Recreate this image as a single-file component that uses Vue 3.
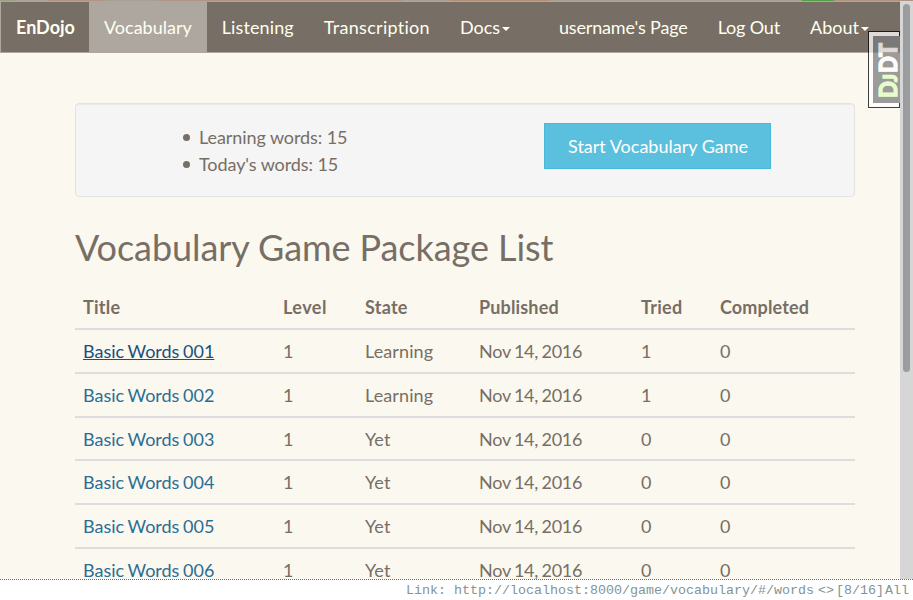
<script setup>
const leftNav = [
  { label: 'Vocabulary', active: true },
  { label: 'Listening', cls: 'loose' },
  { label: 'Transcription', cls: 'looser' },
  { label: 'Docs', caret: true },
]
const rightNav = [
  { label: "username's Page" },
  { label: 'Log Out' },
  { label: 'About', caret: true },
]
const columns = ['Title', 'Level', 'State', 'Published', 'Tried', 'Completed']
const packages = [
  { title: 'Basic Words 001', state: 'Learning', tried: 1, hover: true },
  { title: 'Basic Words 002', state: 'Learning', tried: 1 },
  { title: 'Basic Words 003', state: 'Yet', tried: 0 },
  { title: 'Basic Words 004', state: 'Yet', tried: 0 },
  { title: 'Basic Words 005', state: 'Yet', tried: 0 },
  { title: 'Basic Words 006', state: 'Yet', tried: 0 },
]
</script>

<template>
  <div class="screen">
    <div class="edge"></div>
    <div class="viewport">
      <div class="page">
        <nav class="navbar">
          <a class="brand">EnDojo</a>
          <a v-for="item in leftNav" :key="item.label" class="link" :class="[item.cls, { active: item.active }]">
            {{ item.label }}<i v-if="item.caret" class="caret"></i>
          </a>
          <div class="right">
            <a v-for="item in rightNav" :key="item.label" class="link">
              {{ item.label }}<i v-if="item.caret" class="caret"></i>
            </a>
          </div>
        </nav>
        <main class="container">
          <section class="well">
            <ul class="stats">
              <li>Learning words: 15</li>
              <li>Today's words: 15</li>
            </ul>
            <button class="start">Start Vocabulary Game</button>
          </section>
          <h1>Vocabulary Game Package List</h1>
          <table>
            <colgroup>
              <col class="c-title"><col class="c-level"><col class="c-state">
              <col class="c-published"><col class="c-tried"><col>
            </colgroup>
            <thead>
              <tr><th v-for="c in columns" :key="c">{{ c }}</th></tr>
            </thead>
            <tbody>
              <tr v-for="p in packages" :key="p.title">
                <td><a class="title" :class="{ hover: p.hover }">{{ p.title }}</a></td>
                <td>1</td>
                <td class="state">{{ p.state }}</td>
                <td class="date">Nov 14, 2016</td>
                <td>{{ p.tried }}</td>
                <td>0</td>
              </tr>
            </tbody>
          </table>
        </main>
        <div class="handle">
          <svg width="27" height="67" viewBox="0 0 27 67">
            <g transform="translate(24 61) rotate(-90)" class="djdt">
              <text class="green" x="-1" y="0" font-size="25" textLength="17" lengthAdjust="spacingAndGlyphs">D</text>
              <text class="green" x="15" y="0" font-size="19" textLength="8" lengthAdjust="spacingAndGlyphs">J</text>
              <text x="24" y="0" font-size="25" textLength="17" lengthAdjust="spacingAndGlyphs">D</text>
              <text x="40" y="0" font-size="25" textLength="14" lengthAdjust="spacingAndGlyphs">T</text>
            </g>
          </svg>
        </div>
      </div>
      <div class="scrollbar"><div class="thumb"></div></div>
    </div>
    <footer class="status">
      <span>Link: http://localhost:8000/game/vocabulary/#/words</span>
      <span class="history">&lt;&gt;</span>
      <span>[8/16]</span>
      <span class="all">All</span>
    </footer>
  </div>
</template>

<style>
body { margin: 0; overflow: hidden; }
</style>

<style scoped>
* { box-sizing: border-box; }
.screen {
  width: 913px;
  height: 600px;
  display: flex;
  flex-direction: column;
  overflow: hidden;
  background: #fff;
  color: #776e65;
  font: 18px/25.75px Lato, sans-serif;
}
.edge {
  height: 1px;
  flex: none;
  background: linear-gradient(90deg, #9da083 0 15px, #aaa39a 15px 48px, #b09583 48px 105px, #a7a097 105px 158px, #b09583 158px 404px, #a7a097 404px 450px, #b38f77 450px 550px, #aa9e91 550px 802px, #55a044 802px 834px, #b09583 834px 913px);
}
.viewport { display: flex; height: 578px; flex: none; overflow: hidden; }
.page { position: relative; width: 900px; height: 578px; background: #fbf8ef; overflow: hidden; }
.navbar {
  display: flex;
  height: 52px;
  border: 1px solid #aea79f;
  border-right: 0;
  background: #776e65;
  color: #fffff0;
}
.brand, .link { padding: 12px 15px 0; white-space: nowrap; line-height: 26px; }
.brand { width: 88px; font-weight: 700; }
.link.active { background: #aea79f; }
.loose { letter-spacing: .12px; }
.looser { letter-spacing: .29px; }
.right { display: flex; margin-left: auto; padding-right: 16px; letter-spacing: -.15px; }
.right .link:last-child { letter-spacing: 0; }
.caret {
  display: inline-block;
  margin-left: 2px;
  vertical-align: middle;
  border: 4px solid transparent;
  border-top-color: currentColor;
  border-bottom: 0;
}
.container { width: 780px; margin: 50px 0 0 75px; }
.well {
  display: flex;
  align-items: flex-start;
  height: 94px;
  padding: 19px 0 0 106px;
  border: 1px solid #e3e3e3;
  border-radius: 4px;
  background: #f5f5f5;
  box-shadow: inset 0 1px 1px rgba(0, 0, 0, .05);
}
.stats { width: 362px; margin: 1px 0 0; padding: 0; list-style: none; line-height: 27px; letter-spacing: -.08px; }
.stats li { display: flex; align-items: center; }
.stats li::before {
  content: '';
  width: 7px;
  height: 7px;
  margin: 0 9px 0 1px;
  border-radius: 50%;
  background: #776e65;
}
.start {
  width: 227px;
  height: 46px;
  padding: 0 0 0 1px;
  border: 1px solid #46b8da;
  background: #5bc0de;
  color: #fff;
  font: 18px/26px Lato, sans-serif;
}
h1 { margin: 30px 0 0; height: 40px; font-size: 36px; line-height: 40px; font-weight: 400; letter-spacing: -.07px; white-space: nowrap; }
table { width: 780px; margin-top: 19.25px; border-collapse: separate; border-spacing: 0; table-layout: fixed; }
.c-title { width: 200px; }
.c-level { width: 82px; }
.c-state { width: 114px; }
.c-published { width: 162px; }
.c-tried { width: 79px; }
th, td { padding: 9px 8px 7px; height: 43.75px; border-bottom: 2px solid #ddd; text-align: left; vertical-align: top; }
th { font-weight: 700; letter-spacing: .25px; }
th:nth-child(4), th:nth-child(6) { letter-spacing: .15px; }
th:nth-child(2) { letter-spacing: .45px; }
.state { letter-spacing: .1px; }
.date { letter-spacing: -.25px; word-spacing: -1px; }
.title { color: #2a6e96; word-spacing: -1px; }
.title.hover { color: #19507f; text-decoration: underline; text-decoration-thickness: 1px; }
.handle {
  position: absolute;
  right: 0;
  top: 30px;
  width: 32px;
  height: 77px;
  padding: 4px 0 4px 4px;
  border: 1px solid #000;
  background: #fff;
  opacity: .75;
}
.handle svg { display: block; background: #7d7d7d; }
.djdt { font-family: Lato, sans-serif; font-weight: 900; fill: #fff; stroke: #fff; stroke-width: 1.2px; }
.djdt .green { fill: #dfffbf; stroke: #dfffbf; }
.scrollbar { width: 13px; padding: 3px 3px 0; background: #d6d6d6; }
.thumb { width: 7px; height: 368px; border-radius: 4px; background: #9b9c9e; }
.status {
  display: flex;
  justify-content: flex-end;
  height: 21px;
  padding-right: 4px;
  border-top: 1px dotted #756943;
  background: #fff;
  color: #839496;
  font: 13.33px/22px "Liberation Mono", monospace;
  white-space: pre;
}
.history { margin: 0 2px 0 4px; }
.all { margin-left: 1px; }
</style>
